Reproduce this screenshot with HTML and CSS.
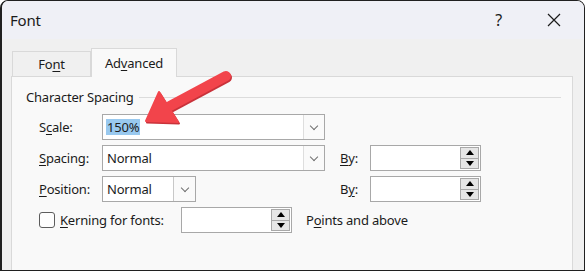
FILE: index.html
```html
<!DOCTYPE html>
<html lang="en">

<head>
  <meta charset="UTF-8">
  <title>Font</title>
  <link rel="stylesheet" href="styles.css">
</head>

<body>
  <div class="window">
    <!-- title bar -->
    <div class="titlebar">
      <span class="title">Font</span>
      <span class="help">?</span>
      <svg class="close" width="14" height="14" viewBox="0 0 14 14">
        <path d="M1 1 L13 13 M13 1 L1 13" stroke="#1b1b1b" stroke-width="1.2" fill="none" />
      </svg>
    </div>

    <div class="dialog-body">
      <!-- tabs -->
      <div class="tabs">
        <div class="tab">Fo<u>n</u>t</div>
        <div class="tab active">Ad<u>v</u>anced</div>
      </div>

      <div class="panel">
        <div class="group-title">
          <span>Character Spacing</span>
          <div class="rule"></div>
        </div>

        <div class="row">
          <div class="left-cell">
            <span class="label">S<u>c</u>ale:</span>
            <div class="combo wide">
              <span class="value"><span class="selected">150%</span></span>
              <span class="drop"><i class="chevron"></i></span>
            </div>
          </div>
        </div>

        <div class="row">
          <div class="left-cell">
            <span class="label"><u>S</u>pacing:</span>
            <div class="combo wide">
              <span class="value">Normal</span>
              <span class="drop"><i class="chevron"></i></span>
            </div>
          </div>
          <span class="by"><u>B</u>y:</span>
          <div class="spin">
            <span class="spin-btns"><b class="up"></b><b class="down"></b></span>
          </div>
        </div>

        <div class="row">
          <div class="left-cell">
            <span class="label"><u>P</u>osition:</span>
            <div class="combo narrow">
              <span class="value">Normal</span>
              <span class="drop boxed"><i class="chevron"></i></span>
            </div>
          </div>
          <span class="by">B<u>y</u>:</span>
          <div class="spin">
            <span class="spin-btns"><b class="up"></b><b class="down"></b></span>
          </div>
        </div>

        <div class="row">
          <span class="checkbox"></span>
          <span class="check-label"><u>K</u>erning for fonts:</span>
          <div class="spin">
            <span class="spin-btns"><b class="up"></b><b class="down"></b></span>
          </div>
          <span class="after">P<u>o</u>ints and above</span>
        </div>
      </div>
    </div>

    <!-- callout arrow over the dialog -->
    <svg class="arrow" width="585" height="271" viewBox="0 0 585 271">
      <g fill="#c9323a" stroke="#c9323a" transform="translate(1,1.5)">
        <line x1="226" y1="76" x2="170" y2="106" stroke-width="10" stroke-linecap="round" />
        <polygon points="146,121 159,92 178,122" stroke-width="2" stroke-linejoin="round" />
      </g>
      <g fill="#f2444b" stroke="#f2444b">
        <line x1="226" y1="76" x2="170" y2="106" stroke-width="10" stroke-linecap="round" />
        <polygon points="146,121 159,92 178,122" stroke-width="2" stroke-linejoin="round" />
      </g>
    </svg>
  </div>
</body>

</html>
```

FILE: styles.css
```css
/* page */
body {
  margin: 0;
  padding: 0;
  background-color: #ffffff;
  font-family: "Noto Sans", "Open Sans", sans-serif;
  font-size: 13px;
  letter-spacing: -0.2px;
  color: #1b1b1b;
}

u {
  text-decoration-thickness: 1px;
  text-underline-offset: 2px;
}

/* window frame */
.window {
  position: relative;
  width: 585px;
  height: 271px;
  box-sizing: border-box;
  border: 1px solid #202020;
  border-left-width: 2px;
  border-radius: 8px 8px 0 0;
  overflow: hidden;
  display: flex;
  flex-direction: column;
}

.titlebar {
  height: 38px;
  flex-shrink: 0;
  background-color: #eff0f6;
  display: flex;
  align-items: center;
  padding-left: 8px;
}

.title {
  font-size: 15px;
  flex: 1;
}

.help {
  font-size: 16px;
  margin-right: 45px;
}

.close {
  margin-right: 23px;
}

/* dialog body */
.dialog-body {
  flex: 1;
  background-color: #f0f0f0;
  padding: 9px 11px 0 9px;
  display: flex;
  flex-direction: column;
}

.tabs {
  display: flex;
  align-items: flex-end;
  height: 28px;
  padding-left: 1px;
  position: relative;
  z-index: 1;
}

.tab {
  box-sizing: border-box;
  height: 25px;
  width: 79px;
  border: 1px solid #d9d9d9;
  border-bottom: none;
  background-color: #f0f0f0;
  display: flex;
  align-items: center;
  justify-content: center;
}

.tab.active {
  height: 29px;
  width: 86px;
  margin-bottom: -1px;
  background-color: #f9f9f9;
  padding-bottom: 1px;
}

.panel {
  flex: 1;
  background-color: #f9f9f9;
  border: 1px solid #d9d9d9;
  border-bottom: none;
  padding: 12px 11px 0 14px;
}

.group-title {
  display: flex;
  align-items: center;
  height: 16px;
  margin-bottom: 9px;
}

.group-title .rule {
  flex: 1;
  height: 1px;
  background-color: #dcdcdc;
  margin-left: 5px;
}

/* form rows */
.row {
  display: flex;
  align-items: center;
  height: 26px;
  margin-bottom: 5px;
  padding-left: 13px;
}

.left-cell {
  display: flex;
  align-items: center;
  width: 286px;
}

.label {
  width: 63px;
}

.combo {
  box-sizing: border-box;
  height: 26px;
  border: 1px solid #a8a8a8;
  background-color: #ffffff;
  display: flex;
  align-items: stretch;
}

.combo.wide {
  width: 223px;
}

.combo.narrow {
  width: 94px;
}

.combo .value {
  flex: 1;
  display: flex;
  align-items: center;
  padding-left: 4px;
}

.selected {
  background-color: #99c9ef;
  padding: 0 1px;
  margin-left: -1px;
  line-height: 16px;
}

.drop {
  width: 20px;
  background-color: #fafafa;
  border-left: 1px solid #dedede;
  display: flex;
  align-items: center;
  justify-content: center;
}

.drop.boxed {
  width: 21px;
  border-left-color: #c8c8c8;
}

.chevron {
  width: 5px;
  height: 5px;
  border-right: 1px solid #707070;
  border-bottom: 1px solid #707070;
  transform: rotate(45deg);
  margin-top: -3px;
}

.by {
  width: 30px;
  margin-left: 15px;
}

/* spin box */
.spin {
  box-sizing: border-box;
  width: 111px;
  height: 26px;
  border: 1px solid #a8a8a8;
  background-color: #ffffff;
  display: flex;
  justify-content: flex-end;
  padding: 1px;
}

.spin-btns {
  width: 19px;
  display: flex;
  flex-direction: column;
}

.spin-btns b {
  flex: 1;
  box-sizing: border-box;
  border: 1px solid #a8a8a8;
  background-color: #e6e6e6;
  display: flex;
  align-items: center;
  justify-content: center;
}

.spin-btns b + b {
  border-top: none;
}

.spin-btns b::after {
  content: "";
  width: 0;
  height: 0;
  border-left: 4px solid transparent;
  border-right: 4px solid transparent;
}

.spin-btns .up::after {
  border-bottom: 5px solid #000000;
}

.spin-btns .down::after {
  border-top: 5px solid #000000;
}

/* checkbox row */
.checkbox {
  box-sizing: border-box;
  width: 16px;
  height: 16px;
  border: 1px solid #5c5c5c;
  border-radius: 3px;
  background-color: #fdfdfd;
}

.check-label {
  margin-left: 5px;
  width: 121px;
}

.after {
  margin-left: 14px;
}

/* arrow overlay */
.arrow {
  position: absolute;
  left: -2px;
  top: -1px;
  pointer-events: none;
}
```
